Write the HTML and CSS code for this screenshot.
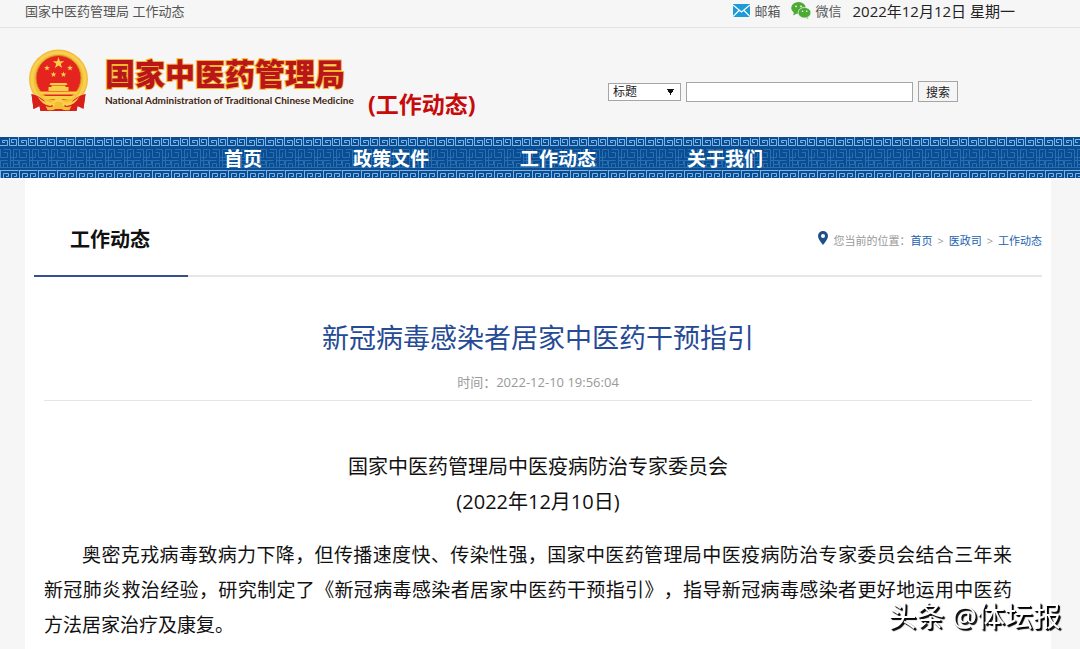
FILE: index.html
```html
<!DOCTYPE html>
<html lang="zh-CN">
<head>
<meta charset="utf-8">
<meta name="viewport" content="width=device-width, initial-scale=1">
<title>新冠病毒感染者居家中医药干预指引</title>
<link rel="stylesheet" href="styles.css">
</head>
<body>
<div class="topbar">
  <span>国家中医药管理局 工作动态</span>
  <div class="tools">
    <span class="tool">
      <svg class="mail" viewBox="0 0 17 13" aria-hidden="true"><rect width="17" height="13" fill="#1e9ad6"/><path d="M0 1 8.500 8 17 1M0 12.500 6 6.500M17 12.500 11 6.500" fill="none" stroke="#fff" stroke-width="1.200"/></svg>
      邮箱
    </span>
    <span class="tool">
      <svg class="wechat" viewBox="0 0 20 17" aria-hidden="true"><ellipse cx="7.500" cy="6" rx="7.300" ry="6" fill="#4caa35"/><path d="M3 10 2.200 13.500 6 11.500M16 14 17.500 16.800 13 15.500" fill="#4caa35"/><ellipse cx="13.500" cy="10.700" rx="6.400" ry="5.300" fill="#4caa35" stroke="#f6f6f6" stroke-width=".7"/><g fill="#fff"><circle cx="5" cy="4.300" r=".9"/><circle cx="10" cy="4.300" r=".9"/><circle cx="11.500" cy="9.200" r=".8"/><circle cx="15.700" cy="9.200" r=".8"/></g></svg>
      微信
    </span>
    <time class="today" datetime="2022-12-12">2022年12月12日 星期一</time>
  </div>
</div>

<header class="header">
  <svg class="emblem" viewBox="0 0 60 64" aria-hidden="true">
    <path d="M3 45Q30 62 57 45L55 59 49 57 48 62H12L11 57 5 60Z" fill="#d81f1c"/>
    <circle cx="30" cy="30" r="29.500" fill="#f3bd35"/>
    <circle cx="30" cy="30" r="26.500" fill="none" stroke="#f8cf55" stroke-width="3"/>
    <circle cx="30" cy="29" r="22.500" fill="#e5231f" stroke="#d58d1c"/>
    <g fill="#f9cf4a">
      <path id="star" d="M30 8 31.400 12.200H35.800L32.300 14.800 33.600 19 30 16.400 26.400 19 27.700 14.800 24.200 12.200H28.600Z"/>
      <use href="#star" transform="translate(3.500 12) scale(.5)"/>
      <use href="#star" transform="translate(10 18.500) scale(.5)"/>
      <use href="#star" transform="translate(20 18.500) scale(.5)"/>
      <use href="#star" transform="translate(26.500 12) scale(.5)"/>
      <path d="M22 34H38L39 36H21ZM23 36.500H37V38H23ZM20 38H40V42H20ZM10 42.500H50L48 45.500H12Z"/>
      <path d="M13 47H47L43 50H17Z"/>
    </g>
    <path d="M3 45Q12 47 18 54L24 56V62H12L11 57 5 60ZM57 45Q48 47 42 54L36 56V62H48L49 57 55 60Z" fill="#d81f1c"/>
    <path d="M9 47Q15 54 22 54L28 49H32L38 54Q45 54 51 47Q47 56 38 57L32 53H28L22 57Q13 56 9 47Z" fill="#f9cf4a"/>
    <path d="M17 57Q22 59 26 57L27 54H33L34 57Q38 59 43 57L41 61Q36 62 33 60H27Q24 62 19 61Z" fill="#f3bd35"/>
  </svg>
  <div class="brand">
    <div class="brand-cn">国家中医药管理局</div>
    <div class="brand-en">National Administration of Traditional Chinese Medicine</div>
  </div>
  <div class="section-name">(工作动态)</div>
  <form class="search">
    <select class="field" aria-label="搜索范围"><option>标题</option></select>
    <input class="keyword" type="text" aria-label="关键词">
    <button class="submit" type="button">搜索</button>
  </form>
</header>

<nav class="nav">
  <svg class="nav-pattern" aria-hidden="true">
    <defs>
      <pattern id="fret" width="19" height="41" patternUnits="userSpaceOnUse">
        <rect width="19" height="41" fill="#0a4d93"/>
        <g fill="none" stroke="#7db4e4">
          <path d="M0 8.500H7.500V3.500H2.500V5.500H5M9.500 1V8.500H16.500V2.500H11.500V5.500H14M18.500 0V9"/>
          <path d="M0 33.500H18.500M.5 34V41M3.500 41V36.500H8.500V39.500H6M11.500 41V36.500H16.500V39.500H14"/>
        </g>
        <g fill="none" stroke="#2870b1">
          <path d="M.5 12V20.500H7.500V15.500H3.500M3.500 12.500H10.500V29.500M7.500 23.500H.5V30M3.500 30.500V26.500H7.500V30.500M13.500 30.500V12.500H18.500M16.500 15.500V20.500H10.500M10.500 23.500H18.500V27.500H14M0 30.500H19"/>
        </g>
      </pattern>
    </defs>
    <rect width="100%" height="100%" fill="url(#fret)"/>
  </svg>
  <ul class="nav-list">
    <li><a href="#">首页</a></li>
    <li><a href="#">政策文件</a></li>
    <li><a href="#">工作动态</a></li>
    <li><a href="#">关于我们</a></li>
  </ul>
</nav>

<main class="panel">
  <div class="panel-head">
    <h2 class="panel-title">工作动态</h2>
    <div class="crumbs">
      <svg class="pin" viewBox="0 0 10 14" aria-hidden="true"><path d="M5 0A5 5 0 0 1 10 5Q10 8 5 14Q0 8 0 5A5 5 0 0 1 5 0Z" fill="#1f4f88"/><circle cx="5" cy="5" r="2" fill="#fff"/></svg>
      <span>您当前的位置：<a href="#">首页</a></span><span>&gt;</span><a href="#">医政司</a><span>&gt;</span><a href="#">工作动态</a>
    </div>
  </div>
  <article class="article">
    <h1 class="title">新冠病毒感染者居家中医药干预指引</h1>
    <div class="meta">时间：2022-12-10 19:56:04</div>
    <div class="byline">国家中医药管理局中医疫病防治专家委员会<br>(2022年12月10日)</div>
    <p class="text">奥密克戎病毒致病力下降，但传播速度快、传染性强，国家中医药管理局中医疫病防治专家委员会结合三年来新冠肺炎救治经验，研究制定了《新冠病毒感染者居家中医药干预指引》，指导新冠病毒感染者更好地运用中医药方法居家治疗及康复。</p>
  </article>
</main>
<div class="watermark">头条 @体坛报</div>
</body>
</html>
```
FILE: styles.css
```css
* { box-sizing: border-box; }
body {
  margin: 0;
  background: #f6f6f6;
  color: #111;
  font-family: "Open Sans", "Noto Sans CJK SC", sans-serif;
  text-spacing-trim: space-all;
  overflow-x: hidden;
}
a { text-decoration: none; }

.topbar {
  display: flex;
  justify-content: space-between;
  align-items: center;
  height: 28px;
  padding: 0 65px 6px 25px;
  border-bottom: 1px solid #e2e2e2;
  color: #555;
  font-size: 13px;
}
.tools { display: flex; align-items: center; gap: 11px; }
.tool { display: flex; align-items: center; gap: 4px; }
.mail { width: 17px; height: 13px; }
.wechat { width: 20px; height: 17px; }
.today { color: #222; font-size: 15px; }

.header {
  display: flex;
  align-items: center;
  height: 109px;
  padding: 0 122px 4px 28px;
}
.emblem { width: 61px; height: 64px; margin-right: 16px; }
.brand { width: 241px; }
.brand-cn {
  color: #b9161b;
  font-size: 30px;
  font-weight: 900;
  line-height: 38px;
  white-space: nowrap;
  -webkit-text-stroke: 2px #f8b62d;
  paint-order: stroke fill;
}
.brand-en {
  color: #3f2410;
  font-family: Lato, "Liberation Sans", sans-serif;
  font-size: 10px;
  font-weight: 700;
  line-height: 14px;
  white-space: nowrap;
}
.section-name {
  margin: 46px auto 0 22px;
  color: #c70b0b;
  font-size: 23px;
  font-weight: 700;
  line-height: 32px;
}
.search { display: flex; align-items: center; gap: 5px; margin-top: 22px; }
.field, .keyword, .submit {
  border: 1px solid #a5a5a5;
  border-radius: 0;
  background: #fff;
  color: #222;
  font-family: inherit;
  font-size: 12px;
}
.field {
  appearance: none;
  width: 73px;
  height: 18px;
  padding: 0 4px;
  line-height: 16px;
  background: conic-gradient(from -30deg at 50% 100%, #111 60deg, transparent 0) no-repeat right 6px top 5px / 7px 6px, #fff;
}
.keyword { width: 227px; height: 20px; }
.submit { width: 40px; height: 21px; padding: 0; background: #f5f5f5; }

.nav { position: relative; height: 41px; }
.nav-pattern { position: absolute; inset: 0; width: 100%; height: 100%; }
.nav-list {
  position: relative;
  display: flex;
  gap: 91px;
  margin: 0;
  padding: 0 0 0 224px;
  list-style: none;
}
.nav-list a { color: #fff; font-size: 19px; font-weight: 700; line-height: 44px; }

.panel {
  min-height: 471px;
  margin: 0 29px 0 25px;
  padding: 0 9px;
  background: #fff;
}
.panel-head {
  display: flex;
  justify-content: space-between;
  height: 99px;
  border-bottom: 2px solid #e6e6e6;
}
.panel-title {
  width: 154px;
  height: 99px;
  margin: 0;
  padding: 46px 0 0 36px;
  border-bottom: 2px solid #35508c;
  color: #111;
  font-size: 20px;
  line-height: 32px;
}
.crumbs {
  display: flex;
  align-items: center;
  gap: 5px;
  height: 124px;
  color: #999;
  font-size: 11px;
}
.crumbs a { color: #2262ad; }
.pin { width: 10px; height: 14px; margin-bottom: 4px; }

.article { padding: 0 10px; }
.title {
  margin: 0;
  padding-top: 40px;
  color: #264a96;
  font-size: 27px;
  font-weight: 400;
  line-height: 42px;
  text-align: center;
}
.meta {
  height: 42px;
  padding-top: 13px;
  border-bottom: 1px solid #e5e5e5;
  color: #999;
  font-size: 13px;
  line-height: 20px;
  text-align: center;
}
.byline {
  padding-top: 48px;
  font-size: 20px;
  line-height: 35px;
  text-align: center;
}
.text {
  margin: 19px 20px 0 0;
  font-size: 19px;
  line-height: 35px;
  text-align: justify;
  text-indent: 2em;
}
.watermark {
  position: fixed;
  right: 19px;
  bottom: 13px;
  color: #fff;
  font-size: 28px;
  line-height: 40px;
  text-shadow: 1px 1px 1px #000, 2px 2px 1px #000;
}
```
